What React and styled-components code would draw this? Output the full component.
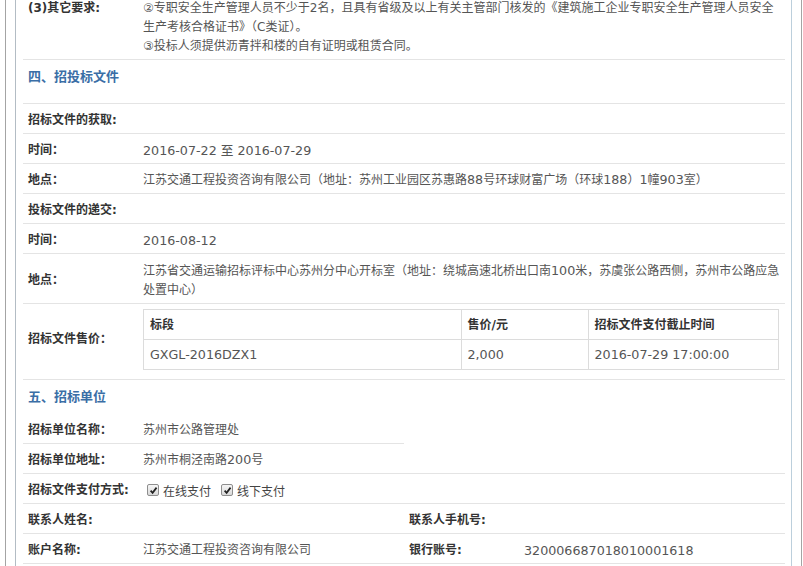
import React from 'react';
import styled, { createGlobalStyle } from 'styled-components';

const GlobalStyle = createGlobalStyle`
  html, body {
    margin: 0;
    padding: 0;
    background: #fff;
    overflow: hidden;
  }
  body {
    font-family: "DejaVu Sans", "Noto Sans CJK SC", sans-serif;
    font-size: 12px;
    color: #555;
  }
`;

const Frame = styled.div`
  margin-left: 5px;
  width: 797px;
  height: 566px;
  box-sizing: border-box;
  border-left: 1px solid #a4a4a4;
  border-right: 1px solid #a4a4a4;
  padding: 0 9px;
`;

const Panel = styled.div`
  height: 100%;
  border-left: 1px solid #b3bcc4;
  border-right: 1px solid #bccfdc;
  background: #fff;
  padding: 0 6px 0 7px;
  overflow: hidden;
`;

const Content = styled.div`
  margin-top: -8px;
`;

const Row = styled.div`
  display: flex;
  align-items: center;
  min-height: 26px;
  border-bottom: ${({ $last }) => ($last ? 'none' : '1px solid #e4e4e4')};
  padding: ${({ $pad }) => $pad || '3px 0 0'};
`;

const Label = styled.div`
  width: 120px;
  flex-shrink: 0;
  box-sizing: border-box;
  padding-left: 5px;
  font-weight: bold;
  color: #333;
  line-height: 19px;
  align-self: ${({ $top }) => ($top ? 'flex-start' : 'center')};
`;

const Value = styled.div`
  flex: 1;
  min-width: 0;
  line-height: 19px;
  padding-right: 6px;
  color: #555;
  display: flex;
  flex-direction: column;
  align-items: flex-start;
`;

const Line = styled.span`
  white-space: nowrap;
`;

const Num = styled.span`
  font-size: 12.7px;
`;

const SectionTitle = styled.div`
  padding: 8px 5px ${({ $ruled }) => ($ruled ? '17px' : '8px')};
  line-height: 18px;
  font-size: 13px;
  font-weight: bold;
  color: #3a6ea6;
  border-bottom: ${({ $ruled }) => ($ruled ? '1px solid #e4e4e4' : 'none')};
`;

const PriceTable = styled.table`
  width: 100%;
  border-collapse: collapse;
  border: 1px solid #dcdcdc;
  table-layout: fixed;
`;

const Th = styled.th`
  box-sizing: border-box;
  height: 30px;
  padding: 1px 0 0 6px;
  text-align: left;
  font-weight: bold;
  color: #333;
  border: 1px solid #dcdcdc;
  width: ${({ $w }) => $w};
`;

const Td = styled.td`
  box-sizing: border-box;
  height: 30px;
  padding: 1px 0 0 6px;
  color: #555;
  border: 1px solid #dcdcdc;
`;

const HalfGrid = styled.div`
  display: grid;
  grid-template-columns: 1fr 1fr;
  border-bottom: 1px solid #e4e4e4;
`;

const Half = styled.div`
  display: flex;
  align-items: center;
  min-height: 26px;
  padding-top: 3px;
`;

const Checks = styled.div`
  display: flex;
  align-items: center;
  gap: 10px;
  padding-left: 4px;
  color: #444;
  font-size: 12px;
`;

const CheckItem = styled.label`
  display: flex;
  align-items: center;
  gap: 4px;
`;

const Box = styled.span`
  display: inline-flex;
  align-items: center;
  justify-content: center;
  width: 10px;
  height: 10px;
  border: 1px solid #8e8e8e;
  border-radius: 2px;
  background: linear-gradient(#f6f6f6, #d9d9d9);
`;

const CheckBox = ({ children }) => (
  <CheckItem>
    <Box>
      <svg width="9" height="9" viewBox="0 0 10 10">
        <path d="M1.8 5.2 L4 7.6 L8.4 1.8" fill="none" stroke="#222" strokeWidth="1.9" />
      </svg>
    </Box>
    {children}
  </CheckItem>
);

const App = () => (
  <>
    <GlobalStyle />
    <Frame>
      <Panel>
        <Content>
          <Row $pad="7px 0 3px">
            <Label $top>(3)其它要求:</Label>
            <Value>
              <Line>②专职安全生产管理人员不少于2名，且具有省级及以上有关主管部门核发的《建筑施工企业专职安全生产管理人员安全</Line>
              <Line>生产考核合格证书》（C类证）。</Line>
              <Line>③投标人须提供沥青拌和楼的自有证明或租赁合同。</Line>
            </Value>
          </Row>

          <SectionTitle $ruled>四、招投标文件</SectionTitle>
          <Row>
            <Label>招标文件的获取:</Label>
          </Row>
          <Row>
            <Label>时间：</Label>
            <Value><Num>2016-07-22 至 2016-07-29</Num></Value>
          </Row>
          <Row>
            <Label>地点：</Label>
            <Value>
              <Line>江苏交通工程投资咨询有限公司（地址：苏州工业园区苏惠路<Num>88</Num>号环球财富广场（环球<Num>188</Num>）<Num>1</Num>幢<Num>903</Num>室）</Line>
            </Value>
          </Row>
          <Row>
            <Label>投标文件的递交:</Label>
          </Row>
          <Row>
            <Label>时间：</Label>
            <Value><Num>2016-08-12</Num></Value>
          </Row>
          <Row $pad="7px 0 3px">
            <Label>地点：</Label>
            <Value>
              <Line>江苏省交通运输招标评标中心苏州分中心开标室（地址：绕城高速北桥出口南<Num>100</Num>米，苏虞张公路西侧，苏州市公路应急</Line>
              <Line>处置中心）</Line>
            </Value>
          </Row>
          <Row $pad="5px 0 9px">
            <Label>招标文件售价：</Label>
            <Value>
              <PriceTable>
                <thead>
                  <tr>
                    <Th $w="50%">标段</Th>
                    <Th $w="20%">售价/元</Th>
                    <Th $w="30%">招标文件支付截止时间</Th>
                  </tr>
                </thead>
                <tbody>
                  <tr>
                    <Td><Num>GXGL-2016DZX1</Num></Td>
                    <Td><Num>2,000</Num></Td>
                    <Td><Num>2016-07-29 17:00:00</Num></Td>
                  </tr>
                </tbody>
              </PriceTable>
            </Value>
          </Row>

          <SectionTitle>五、招标单位</SectionTitle>
          <HalfGrid>
            <div>
              <Row>
                <Label>招标单位名称：</Label>
                <Value>苏州市公路管理处</Value>
              </Row>
              <Row $last>
                <Label>招标单位地址：</Label>
                <Value><span>苏州市桐泾南路<Num>200</Num>号</span></Value>
              </Row>
            </div>
            <div />
          </HalfGrid>
          <Row>
            <Label>招标文件支付方式:</Label>
            <Checks>
              <CheckBox>在线支付</CheckBox>
              <CheckBox>线下支付</CheckBox>
            </Checks>
          </Row>
          <HalfGrid>
            <Half>
              <Label>联系人姓名:</Label>
            </Half>
            <Half>
              <Label>联系人手机号:</Label>
            </Half>
          </HalfGrid>
          <HalfGrid>
            <Half>
              <Label>账户名称:</Label>
              <Value>江苏交通工程投资咨询有限公司</Value>
            </Half>
            <Half>
              <Label>银行账号:</Label>
              <Value><Num>320006687018010001618</Num></Value>
            </Half>
          </HalfGrid>
        </Content>
      </Panel>
    </Frame>
  </>
);

export default App;
